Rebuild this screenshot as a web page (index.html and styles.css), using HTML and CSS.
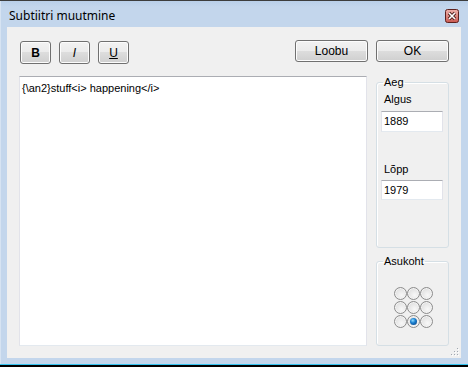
FILE: index.html
```html
<!DOCTYPE html>
<html lang="et">
<head>
    <meta charset="UTF-8">
    <title>Subtiitri muutmine</title>
    <link rel="stylesheet" href="styles.css">
</head>
<body>
    <div class="top-edge"></div>
    <div class="window">
        <div class="titlebar">
            <span class="title">Subtiitri muutmine</span>
            <span class="close-btn">
                <svg width="14" height="14" viewBox="0 0 14 14">
                    <defs>
                        <linearGradient id="closeFill" x1="0" y1="0" x2="0" y2="1">
                            <stop offset="0" stop-color="#eeb0aa"/>
                            <stop offset="0.5" stop-color="#dd8880"/>
                            <stop offset="1" stop-color="#c9574f"/>
                        </linearGradient>
                    </defs>
                    <rect x="0.5" y="0.5" width="13" height="13" rx="2" fill="url(#closeFill)" stroke="#5e211d"/>
                    <path d="M4 4 L10 10 M10 4 L4 10" stroke="#4a1d1a" stroke-width="3.2"/>
                    <path d="M4 4 L10 10 M10 4 L4 10" stroke="#ffffff" stroke-width="1.6"/>
                </svg>
            </span>
        </div>

        <div class="client">
            <div class="toolbar">
                <div class="format-btns">
                    <button class="btn btn-small bold">B</button>
                    <button class="btn btn-small italic">I</button>
                    <button class="btn btn-small underline">U</button>
                </div>
                <div class="action-btns">
                    <button class="btn btn-wide">Loobu</button>
                    <button class="btn btn-wide">OK</button>
                </div>
            </div>

            <div class="content">
                <div class="editor">{\an2}stuff&lt;i&gt; happening&lt;/i&gt;</div>

                <div class="side">
                    <fieldset class="group group-time">
                        <legend>Aeg</legend>
                        <div class="field-label">Algus</div>
                        <div class="field field-start">1889</div>
                        <div class="field-label label-end">Lõpp</div>
                        <div class="field field-end">1979</div>
                    </fieldset>

                    <fieldset class="group group-pos">
                        <legend>Asukoht</legend>
                        <div class="radio-grid">
                            <span class="radio"></span>
                            <span class="radio"></span>
                            <span class="radio"></span>
                            <span class="radio"></span>
                            <span class="radio"></span>
                            <span class="radio"></span>
                            <span class="radio"></span>
                            <span class="radio checked"></span>
                            <span class="radio"></span>
                        </div>
                    </fieldset>
                </div>
            </div>

            <!-- size grip in the corner -->
            <svg class="grip" width="10" height="10" viewBox="0 0 10 10">
                <g fill="#ffffff">
                    <rect x="8" y="2" width="1" height="1"/>
                    <rect x="5" y="5" width="1" height="1"/>
                    <rect x="8" y="5" width="1" height="1"/>
                    <rect x="2" y="8" width="1" height="1"/>
                    <rect x="5" y="8" width="1" height="1"/>
                    <rect x="8" y="8" width="1" height="1"/>
                </g>
                <g fill="#a0a7b0">
                    <rect x="7" y="1" width="1" height="1"/>
                    <rect x="4" y="4" width="1" height="1"/>
                    <rect x="7" y="4" width="1" height="1"/>
                    <rect x="1" y="7" width="1" height="1"/>
                    <rect x="4" y="7" width="1" height="1"/>
                    <rect x="7" y="7" width="1" height="1"/>
                </g>
            </svg>
        </div>
    </div>
    <div class="bottom-edge"></div>
</body>
</html>
```

FILE: styles.css
```css
body {
    margin: 0;
    padding: 0;
    width: 468px;
    height: 367px;
    overflow: hidden;
    background-color: #000;
    font-family: "Liberation Sans", Arial, sans-serif;
    font-size: 11px;
}

.top-edge {
    height: 1px;
    background-color: #3d3d3d;
}

.window {
    background-color: #c3d6ec;
    border-left: 1px solid #d6e3f2;
    padding: 0 7px 6px 6px;
}

.titlebar {
    height: 26px;
    display: flex;
    align-items: center;
    justify-content: space-between;
    background: linear-gradient(#b9cfe9, #c3d6ec 6px);
    margin: 0 -7px 0 -6px;
    padding: 0 9px 0 8px;
}

.title {
    font-family: "Noto Sans", "Open Sans", sans-serif;
    font-size: 12px;
    color: #000;
    padding-top: 3px;
}

.close-btn {
    display: flex;
    margin-top: 3px;
}

.client {
    position: relative;
    width: 454px;
    height: 331px;
    background-color: #f0f0f0;
    box-sizing: border-box;
}

.toolbar {
    display: flex;
    justify-content: space-between;
    align-items: flex-start;
    padding: 13px 12px 0 13px;
}

.format-btns {
    display: flex;
    gap: 8px;
    margin-top: 1px;
}

.action-btns {
    display: flex;
    gap: 8px;
}

.btn {
    font-family: "Liberation Sans", Arial, sans-serif;
    font-size: 12px;
    color: #000;
    border: 1px solid #707070;
    border-radius: 3px;
    background: linear-gradient(#f2f2f2 0%, #ebebeb 49%, #dddddd 50%, #cfcfcf 100%);
    box-shadow: inset 0 0 0 1px #fcfcfc;
    padding: 0;
    margin: 0;
}

.btn-small {
    width: 31px;
    height: 23px;
}

.btn-wide {
    width: 73px;
    height: 22px;
}

.bold {
    font-weight: bold;
}

.italic {
    font-style: italic;
}

.underline {
    text-decoration: underline;
}

.content {
    display: flex;
    gap: 9px;
    margin-top: 12px;
    padding-left: 12px;
}

.editor {
    width: 348px;
    height: 270px;
    box-sizing: border-box;
    background-color: #fff;
    border: 1px solid #e2e3ea;
    border-top-color: #abadb3;
    border-bottom-color: #e3e9ef;
    padding: 5px 2px;
    color: #000;
    line-height: 13px;
}

.side {
    width: 73px;
    display: flex;
    flex-direction: column;
}

.group {
    margin: 0;
    padding: 0;
    border: 1px solid #d5dfe5;
    border-radius: 3px;
    box-sizing: border-box;
    box-shadow: inset 1px 1px 0 #fff;
}

.group legend {
    margin-left: 6px;
    padding: 0 1px;
    line-height: 13px;
    color: #000;
}

.group-time {
    height: 172px;
}

.field-label {
    margin: 4px 0 0 7px;
    line-height: 13px;
}

.label-end {
    margin-top: 31px;
}

.field {
    margin: 5px 0 0 4px;
    width: 62px;
    height: 21px;
    box-sizing: border-box;
    background-color: #fff;
    border: 1px solid #e2e3ea;
    border-top-color: #abadb3;
    border-bottom-color: #e3e9ef;
    padding: 3px 2px;
    line-height: 13px;
}

.field-end {
    margin-top: 4px;
    height: 20px;
}

.group-pos {
    margin-top: 7px;
    height: 91px;
}

.radio-grid {
    display: grid;
    grid-template-columns: repeat(3, 13px);
    row-gap: 1px;
    justify-content: center;
    margin-top: 19px;
    padding-left: 1px;
}

.radio {
    width: 13px;
    height: 13px;
    box-sizing: border-box;
    border-radius: 50%;
    border: 1px solid #8c8c8c;
    background: radial-gradient(circle at 60% 65%, #f8f8f8 0%, #e6e6e6 55%, #cfcfcf 100%);
    box-shadow: inset 0 0 0 1px #f4f4f4;
    position: relative;
}

.radio.checked::after {
    content: "";
    position: absolute;
    left: 2px;
    top: 2px;
    width: 7px;
    height: 7px;
    border-radius: 50%;
    background: radial-gradient(circle at 40% 35%, #8fdcff 0%, #1a7fd0 40%, #0a3a78 100%);
}

.grip {
    position: absolute;
    right: 1px;
    bottom: 1px;
}

.bottom-edge {
    height: 1px;
    background-color: #35c4f0;
}
```
